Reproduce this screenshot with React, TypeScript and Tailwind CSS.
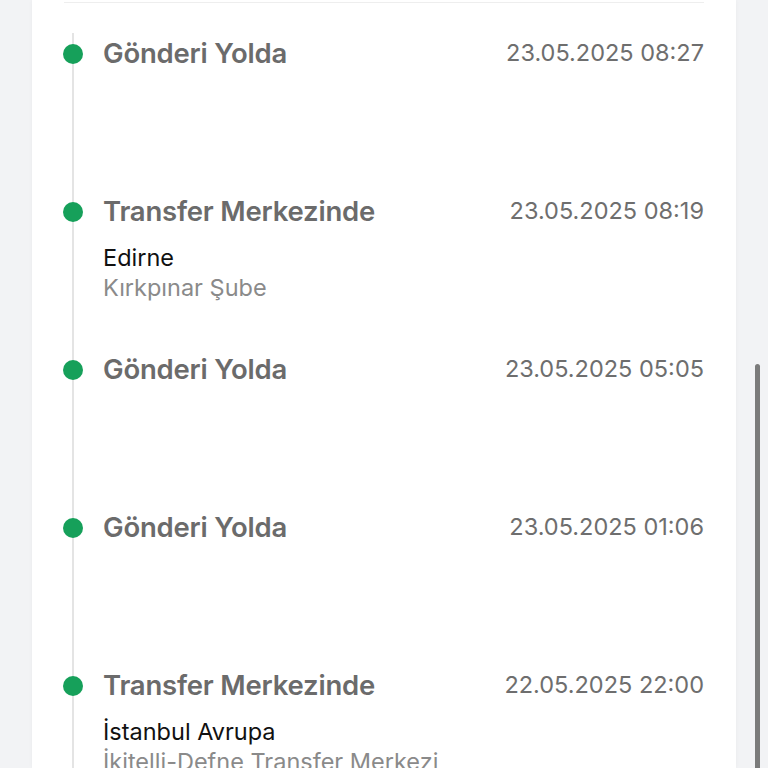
import React from "react";

type Step = {
  title: string;
  date: string;
  city?: string;
  branch?: string;
};

const steps: Step[] = [
  { title: "Gönderi Yolda", date: "23.05.2025 08:27" },
  { title: "Transfer Merkezinde", date: "23.05.2025 08:19", city: "Edirne", branch: "Kırkpınar Şube" },
  { title: "Gönderi Yolda", date: "23.05.2025 05:05" },
  { title: "Gönderi Yolda", date: "23.05.2025 01:06" },
  { title: "Transfer Merkezinde", date: "22.05.2025 22:00", city: "İstanbul Avrupa", branch: "İkitelli-Defne Transfer Merkezi" },
];

export default function App() {
  return (
    <div
      className="relative h-[768px] w-[768px] overflow-hidden bg-[#f2f3f5]"
      style={{ fontFamily: "Inter, 'Noto Sans', sans-serif" }}
    >
      <div className="mx-8 h-full bg-white px-8 shadow-[0_0_4px_rgba(0,0,0,0.04)]">
        <div className="h-[3px] border-b border-[#eeeeee]" />
        <div className="pt-[33px]">
          {steps.map((s, i) => (
            <div key={i} className="flex h-[158px]">
              {/* dot + line */}
              <div className="relative w-[39px] shrink-0">
                <div className="absolute left-[8px] top-[-3px] bottom-0 w-[2px] bg-[#e4e4e4]" />
                <div className="absolute left-[-1px] top-[8px] h-[20px] w-[20px] rounded-full bg-[#16a05a]" />
              </div>
              <div className="flex-1">
                <div className="flex items-center justify-between">
                  <div className="text-[27.5px] font-semibold leading-[34px] tracking-[-0.2px] text-[#6b6b6b]">
                    {s.title}
                  </div>
                  <div className="text-[23.5px] leading-[34px] text-[#6e6e6e]">{s.date}</div>
                </div>
                {s.city && (
                  <div className="mt-[15px]">
                    <div className="text-[23.5px] leading-[30px] text-[#111111]">{s.city}</div>
                    <div className="text-[23.5px] leading-[30px] text-[#8a8a8a]">{s.branch}</div>
                  </div>
                )}
              </div>
            </div>
          ))}
        </div>
      </div>
      {/* scrollbar thumb */}
      <div className="absolute left-[755px] top-[364px] h-[420px] w-[5px] rounded-full bg-[#7b7b7b]" />
    </div>
  );
}
